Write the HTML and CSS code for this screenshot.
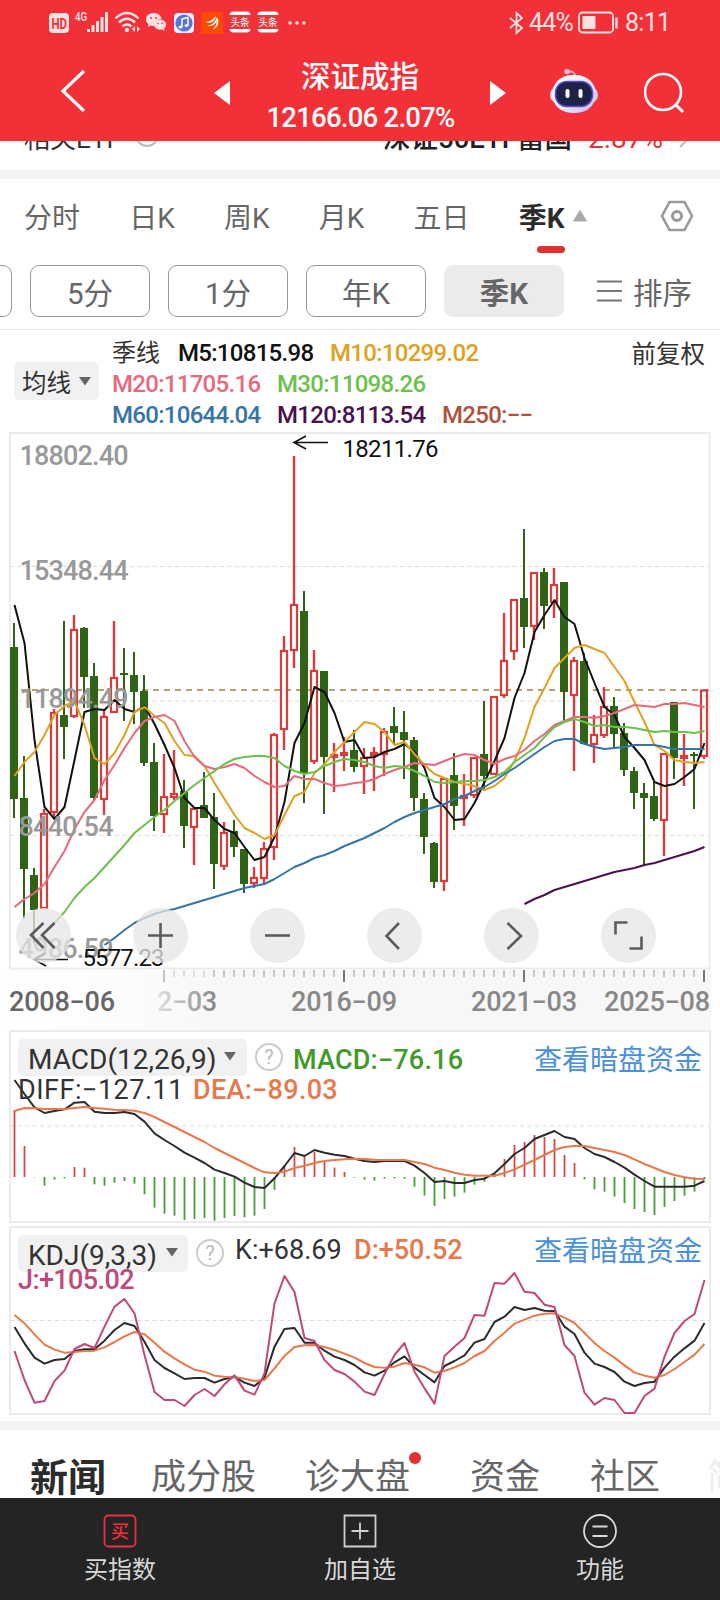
FILE: index.html
```html
<!DOCTYPE html>
<html lang="zh-CN">
<head>
<meta charset="utf-8">
<title>深证成指</title>
<link rel="stylesheet" href="styles.css">
</head>
<body>
<div class="screen">
  <header class="header">
    <div class="status">
      <svg class="status-icons" width="260" height="30" viewBox="48 8 260 30">
        <rect x="49" y="13" width="20" height="20" rx="4" fill="#ffe1e1"/>
        <text x="51.5" y="28.5" font-size="14" font-weight="700" textLength="15.5" lengthAdjust="spacingAndGlyphs" fill="#f33037">HD</text>
        <text x="75" y="20.5" font-size="12" textLength="12" lengthAdjust="spacingAndGlyphs" font-weight="500" fill="#ffe1e1">4G</text>
        <g fill="#ffe1e1"><rect x="87" y="29" width="3" height="3"/><rect x="91.500" y="25" width="3" height="7"/><rect x="96" y="21" width="3" height="11"/><rect x="100.500" y="17" width="3" height="15"/><rect x="105" y="12" width="3" height="20"/></g>
        <g fill="none" stroke="#ffe1e1" stroke-width="2.400"><path d="M115.500 18.500Q127 7.500 138.500 18.500M119 22.500Q127 15 135 22.500M122.500 26.500Q127 22.500 131.500 26.500"/></g>
        <circle cx="127" cy="30" r="2.200" fill="#ffe1e1"/>
        <path d="M135 26v6l-3-3zM137 26v6l3-3z" fill="#ffe1e1"/>
        <path d="M153.500 13c-4.500 0-7.500 3-7.500 6.300 0 2 1 3.700 2.600 4.900l-.8 2.800 3-1.500 3.500.4a7 7 0 0 1 7.300-7.200c-.5-3.300-4-5.700-8.100-5.700z" fill="#ffe1e1"/>
        <path d="M160 19.500c-3.500 0-6 2.300-6 5.100s2.700 5.100 6 5.100l2.200-.3 2.500 1.400-.6-2.300c1.300-1 2-2.300 2-3.900 0-2.800-2.700-5.100-6.100-5.100z" fill="#ffe1e1"/>
        <g fill="#f33037"><circle cx="151" cy="18" r="1"/><circle cx="156" cy="18" r="1"/><circle cx="158" cy="23.500" r=".8"/><circle cx="162" cy="23.500" r=".8"/></g>
        <rect x="174" y="13" width="20" height="20" rx="4" fill="#f3f0ff"/><circle cx="184" cy="23" r="8.600" fill="#5a74de"/>
        <path d="M182 27v-8l6-1.500v8" fill="none" stroke="#fff" stroke-width="1.500"/><ellipse cx="180.500" cy="27" rx="1.900" ry="1.500" fill="#fff"/><ellipse cx="186.500" cy="25.500" rx="1.900" ry="1.500" fill="#fff"/>
        <rect x="201" y="12" width="22" height="22" fill="#ff4a00"/>
        <path d="M205 22c5 0 8-3 11-6-1 6-5 8-11 6zM207 26c6-1 9-5 10-9 1 6-4 10-10 9zM212 30c4-3 5-7 5-13 3 5 1 11-5 13z" fill="#fff"/>
        <g id="toutiao"><rect x="229.500" y="11.500" width="21" height="21" rx="4" fill="#fff"/><rect x="229" y="15" width="22" height="14" fill="#e8383c"/><text x="230.500" y="26" font-size="10" textLength="19" lengthAdjust="spacingAndGlyphs" fill="#fff">头条</text></g>
        <use href="#toutiao" x="28"/>
        <g fill="#ffe1e1"><circle cx="290" cy="23" r="1.800"/><circle cx="297" cy="23" r="1.800"/><circle cx="304" cy="23" r="1.800"/></g>
      </svg>
      <svg class="bt" width="15" height="24" viewBox="0 0 15 24"><path d="M1 7l12 10-5.500 5V2L13 7 1 17" fill="none" stroke="#ffe1e1" stroke-width="1.800"/></svg>
      <span class="pct">44%</span>
      <svg class="batt" width="42" height="24" viewBox="0 0 42 24"><rect x="1" y="1.500" width="34" height="20" rx="3.500" fill="none" stroke="#ffe1e1" stroke-width="1.800"/><rect x="4.500" y="5" width="13" height="13" rx="1" fill="#ffe1e1"/><path d="M38.500 6.500v11" stroke="#ffe1e1" stroke-width="2.400"/></svg>
      <span class="time">8:11</span>
    </div>
    <div class="nav">
      <svg class="back" width="26" height="44" viewBox="0 0 26 44"><path d="M24 2L3 22l21 20" fill="none" stroke="#fff" stroke-width="3.200"/></svg>
      <svg class="prev" width="16" height="24"><path d="M16 0v24L0 12z" fill="#fff"/></svg>
      <div class="title"><div class="name">深证成指</div><div class="quote">12166.06 2.07%</div></div>
      <svg width="16" height="24"><path d="M0 0v24l16-12z" fill="#fff"/></svg>
      <svg class="robot" width="48" height="46" viewBox="0 0 48 46">
        <defs><linearGradient id="rb" x1="0" y1="0" x2="1" y2="1"><stop offset="0" stop-color="#fff"/><stop offset=".5" stop-color="#eee9ff"/><stop offset="1" stop-color="#c9b8ef"/></linearGradient></defs>
        <path d="M17 4q8-2 8 5" fill="none" stroke="#f6a9bb" stroke-width="2"/><circle cx="17" cy="3.500" r="2.700" fill="#f9b8c6"/>
        <ellipse cx="5" cy="27" rx="5" ry="7" fill="#f4d9ee"/><ellipse cx="43" cy="27" rx="5" ry="7" fill="#d9c3f3"/>
        <rect x="2" y="7" width="44" height="38" rx="20" fill="url(#rb)"/><rect x="5.500" y="13.500" width="37" height="25" rx="11.500" fill="#1c2347" stroke="#5b4bd0" stroke-width="1.500"/>
        <rect x="15.500" y="21" width="4" height="9" rx="2" fill="#fff"/><rect x="28.500" y="21" width="4" height="9" rx="2" fill="#fff"/>
      </svg>
      <svg class="search" width="42" height="42" viewBox="0 0 42 42"><circle cx="19" cy="20" r="18" fill="none" stroke="#fff" stroke-width="2.600"/><path d="M32 33l7 7" stroke="#fff" stroke-width="3"/></svg>
    </div>
  </header>

  <div class="related">
    <span>相关ETF</span><i class="info"></i>
    <span class="etf">深证50ETF富国</span><span class="etf-up">2.87%</span>
    <svg width="10" height="18"><path d="M1 1l8 8-8 8" fill="none" stroke="#bbb" stroke-width="2"/></svg>
  </div>

  <nav class="tabs">
    <span>分时</span><span>日K</span><span>周K</span><span>月K</span><span>五日</span>
    <span class="on">季K<i class="bar"></i></span>
    <svg class="tri" width="16" height="13"><path d="M8 1.500L14.500 12h-13z" fill="#aaa" stroke="#aaa" stroke-linejoin="round"/></svg>
    <svg class="hex" width="34" height="34" viewBox="0 0 34 34"><g fill="none" stroke="#999" stroke-linejoin="round"><path d="M9.500 3h15L32 17l-7.500 14h-15L2 17z" stroke-width="2.600"/><circle cx="17" cy="17" r="4.500" stroke-width="3"/></g></svg>
  </nav>

  <div class="pills">
    <b class="stub"></b><span>5分</span><span>1分</span><span>年K</span><span class="on">季K</span>
    <svg width="26" height="24"><path d="M1 2.500h25M1 12h25M1 21.500h25" stroke="#777" stroke-width="2.200"/></svg><em>排序</em>
  </div>

  <div class="legend">
    <button class="chip">均线<svg width="12" height="9"><path d="M0 0h12L6 8.500z" fill="#666"/></svg></button>
    <div class="ma">
      <div><span class="cn">季线</span><span class="m5">M5:10815.98</span><span class="m10">M10:10299.02</span></div>
      <div><span class="m20">M20:11705.16</span><span class="m30">M30:11098.26</span></div>
      <div><span class="m60">M60:10644.04</span><span class="m120">M120:8113.54</span><span class="m250">M250:−−</span></div>
    </div>
    <span class="adj">前复权</span>
  </div>

  <div class="kline"><svg id="kline" width="720" height="598" viewBox="0 432 720 598"></svg></div>

  <section class="panel macd">
    <svg class="plot" id="macd" width="702" height="193" viewBox="9 1030 702 193"></svg>
    <div class="row">
      <button class="pick"><span class="macd-name">MACD(12,26,9)</span><svg width="12" height="9"><path d="M0 0h12L6 8.500z" fill="#666"/></svg></button>
      <i class="help">?</i><span class="val v-macd">MACD:−76.16</span><a class="link">查看暗盘资金</a>
    </div>
    <div class="row2"><span class="val v-diff">DIFF:−127.11</span><span class="val v-dea">DEA:−89.03</span></div>
  </section>
  <section class="panel kdj">
    <svg class="plot" id="kdj" width="702" height="189" viewBox="9 1226 702 189"></svg>
    <div class="row">
      <button class="pick"><span class="kdj-name">KDJ(9,3,3)</span><svg width="12" height="9"><path d="M0 0h12L6 8.500z" fill="#666"/></svg></button>
      <i class="help">?</i><span class="val v-k">K:+68.69</span><span class="val v-d">D:+50.52</span><a class="link">查看暗盘资金</a>
    </div>
    <div class="row2"><span class="val v-j">J:+105.02</span></div>
  </section>

  <nav class="news"><span class="on">新闻</span><span>成分股</span><span class="dot">诊大盘</span><span>资金</span><span>社区</span><span class="more">简</span></nav>

  <footer class="bottom">
    <div><svg width="34" height="34" viewBox="0 0 34 34"><rect x="1.500" y="1.500" width="31" height="31" rx="4" fill="none" stroke="#e8323a" stroke-width="1.800"/><text x="8" y="23.500" font-size="18" font-weight="500" fill="#f33037">买</text></svg><span>买指数</span></div>
    <div><svg width="34" height="34" viewBox="0 0 34 34"><path d="M1.500 1.500h31v31h-31zM17 8.500v17M8.500 17h17" fill="none" stroke="#d0d0d0" stroke-width="1.800"/></svg><span>加自选</span></div>
    <div><svg width="34" height="34" viewBox="0 0 34 34"><circle cx="17" cy="17" r="16" fill="none" stroke="#d8d8d8" stroke-width="1.800"/><path d="M9.500 12.500h15M9.500 22h15" stroke="#d8d8d8" stroke-width="1.800"/></svg><span>功能</span></div>
  </footer>
</div>
<script src="charts.js"></script>
</body>
</html>
```

FILE: styles.css
```css
* { box-sizing: border-box; }
body { margin: 0; background: #fff; font-family: Roboto, "Noto Sans CJK SC", sans-serif; color: #333; }
svg { display: block; flex: none; }
i, em { font-style: normal; }
button { border: 0; padding: 0; margin: 0; font: inherit; color: inherit; }
span, a { white-space: nowrap; }
.screen { width: 720px; height: 1600px; overflow: hidden; display: flex; flex-direction: column; }
.screen > * { flex: none; }

.header { height: 141px; background: #f23037; color: #fff; position: relative; z-index: 2; }
.status { height: 45px; display: flex; align-items: center; padding-left: 48px; color: #ffe1e1; font-size: 25px; }
.bt { margin-left: 201px; }
.pct { margin-left: 5px; width: 44px; letter-spacing: -0.8px; }
.batt { margin-left: 5px; }
.time { margin-left: 5px; letter-spacing: -0.7px; }
.nav { height: 96px; display: flex; align-items: center; padding-left: 60px; }
.back { position: relative; top: -2px; }
.prev { margin-left: 128px; }
.title { width: 260px; text-align: center; padding-top: 10px; }
.name { font-size: 29.500px; line-height: 36px; font-weight: 500; margin-top: 4px; }
.quote { font-size: 27.500px; line-height: 46px; font-weight: 500; letter-spacing: -0.75px; padding-left: 1px; }
.robot { margin-left: 44px; position: relative; top: -2px; }
.search { margin-left: 46px; }

.related { height: 29px; display: flex; align-items: center; padding: 0 24px; font-size: 26px; line-height: 26px; position: relative; }
.related > * { position: relative; top: -17px; flex: none; }
.related .info { width: 24px; height: 24px; border: 2px solid #bbb; border-radius: 50%; margin-left: 14px; top: -21px; }
.related .etf { margin-left: auto; font-size: 27.500px; font-weight: 500; color: #222; }
.related .etf-up { color: #e03038; width: 76px; margin-left: 16px; font-size: 28px; font-weight: 400; }
.related svg { margin-left: 15px; margin-right: 7px; }

.tabs { height: 95px; padding-bottom: 13px; border-top: 9px solid #f4f4f4; display: flex; align-items: center; position: relative; padding-left: 24px; font-size: 28px; color: #666; }
.tabs span + span { margin-left: 49.200px; }
.tabs .on { font-weight: 700; color: #2b2b2b; position: relative; }
.bar { position: absolute; left: 18px; top: 50px; width: 28px; height: 7px; border-radius: 4px; background: #e03030; }
.tri { margin-left: 7px; }
.hex { margin-left: auto; margin-right: 26px; }

.pills { height: 65px; display: flex; align-items: center; padding-bottom: 13px; font-size: 29.500px; color: #666; border-bottom: 1.500px solid #e6e6e6; }
.pills span, .stub { height: 52px; width: 120px; border: 1.500px solid #999; border-radius: 9px; display: flex; align-items: center; justify-content: center; margin-right: 18px; }
.pills .stub { width: 32px; margin-left: -20px; }
.pills .on { background: #ebebeb; border-color: #ebebeb; font-weight: 700; }
.pills svg { margin-left: 14px; }
.pills em { margin-left: 11px; }

.legend { height: 102px; display: flex; padding-left: 14px; position: relative; font-size: 24.500px; }
.chip { width: 85px; height: 38px; margin-top: 32px; border-radius: 5px; background: #f1f1f1; display: flex; align-items: center; justify-content: center; gap: 8px; }
.ma { margin-left: 13px; padding-top: 8px; font-size: 24px; font-weight: 500; }
.ma div { height: 31px; line-height: 31px; display: flex; }
.ma span { width: 165px; }
.ma .cn { width: 66px; font-weight: 400; }
.ma .m5 { width: 152px; color: #111; }
.m10 { color: #e0a020; } .m20 { color: #e8687c; } .m30 { color: #6cc04c; }
.m60 { color: #3574a8; } .m120 { color: #4a1050; } .m250 { color: #b0523c; }
.ma span:not(.cn) { letter-spacing: -0.7px; }
.adj { position: absolute; right: 15px; top: 7px; line-height: 36px; }

.kline { height: 598px; }
.panel { width: 702px; margin-left: 9px; border: 2px solid #ebebeb; position: relative; }
.macd { height: 193px; }
.kdj { height: 189px; margin-top: 3px; }
.plot { position: absolute; left: -2px; top: -2px; }
.row, .row2 { position: relative; display: flex; padding-left: 7px; }
.row { height: 37px; margin-top: 7px; }
.pick { height: 37px; border-radius: 5px; background: #f1f1f1; display: flex; align-items: center; padding-left: 10px; font-size: 28px; gap: 10px; }
.pick span { text-align: left; line-height: 42px; margin-top: 4px; }
.pick svg { margin-top: -2px; }
.macd .pick { width: 229px; } .kdj .pick { width: 170px; }
.macd-name { width: 186px; letter-spacing: 0; }
.kdj-name { width: 128px; letter-spacing: 0; }
.help { width: 28px; height: 28px; border: 2px solid #ccc; border-radius: 50%; margin: 4px 0 0 8px; font-size: 20px; line-height: 24px; text-align: center; color: #bbb; }
.val { font-size: 27px; font-weight: 400; line-height: 32px; }
.v-macd { color: #3f9a2a; margin: 5px 0 0 10px; font-weight: 500; letter-spacing: 0.2px; }
.v-k { margin: -1px 0 0 11px; width: 119px; }
.v-d { color: #e8784a; margin-top: -1px; font-weight: 500; }
.link { position: absolute; left: 523px; top: 2px; font-size: 28px; line-height: 40px; color: #4a8fdc; }
.kdj .link { top: -3px; }
.row2 { height: 32px; margin-top: -2px; }
.v-diff { width: 175px; letter-spacing: 0.5px; }
.v-dea { color: #e8784a; font-weight: 500; letter-spacing: 0.3px; }
.kdj .row2 { margin-top: -8px; }
.v-j { color: #c0487c; font-weight: 500; letter-spacing: -0.6px; }

.news { margin-top: 6px; border-top: 9px solid #f4f4f4; height: 77px; display: flex; position: relative; padding-left: 30px; font-size: 35px; line-height: 50px; color: #666; overflow: hidden; }
.news span { margin-top: 23px; flex: none; }
.news .on { font-size: 38px; font-weight: 700; color: #2b2b2b; width: 121px; }
.news span:nth-child(2) { width: 154px; }
.news .dot { width: 165px; position: relative; }
.dot::after { content: ""; position: absolute; left: 104px; top: -1px; width: 12px; height: 12px; border-radius: 50%; background: #e03030; }
.news span:nth-child(4) { width: 120px; }
.news span:nth-child(5) { width: 117px; }
.more { color: #eee; }

.bottom { height: 102px; background: #242424; color: #d8d8d8; display: flex; }
.bottom div { flex: 1; display: flex; flex-direction: column; align-items: center; padding-top: 16px; font-size: 24px; line-height: 36px; gap: 4px; }
```

FILE: charts.js
```js
const X = i => 14.5 + i * 10;
const grid = (y, c = '#ddd', w = 1, d = '4 3.5') =>
  `<path d="M10 ${y}H709" stroke="${c}" stroke-width="${w}" stroke-dasharray="${d}"/>`;
const line = (ys, c, from = 0, w = 2) =>
  `<polyline fill="none" stroke="${c}" stroke-width="${w}" stroke-linejoin="round" points="${ys.map((y, i) => X(i + from) + ',' + y).join(' ')}"/>`;
const label = (x, y, len, size, color, t, weight = 500) =>
  `<text x="${x}" y="${y}" textLength="${len}" font-size="${size}" fill="${color}" font-weight="${weight}">${t}</text>`;

// side, high, body top, body bottom, low
const candles = `g623,647,799,818 g756,798,869,919 g868,875,910,943 r809,814,908,909 r709,713,812,818 g621,715,727,759 r615,630,716,718 g627,628,677,708 g663,676,798,800 r709,717,799,815
r621,678,712,713 g648,673,675,721 g652,675,692,724 g675,691,763,766 g743,762,816,831 r754,797,814,833 r750,794,797,800 g780,791,826,848 r808,809,827,865 g772,805,818,818
g793,817,864,889 r822,833,866,870 g820,831,847,857 g849,849,884,893 r867,878,883,888 r842,849,878,885 r733,735,847,860 r636,651,729,750 r456,605,650,668 g591,611,774,803
r650,671,761,764 g671,671,757,814 r743,755,757,792 r737,753,755,771 g730,750,767,772 r748,758,766,794 r747,753,755,791 r728,732,754,776 g707,726,733,745 g711,732,740,779
g737,740,798,811 g793,799,837,854 g842,843,882,888 r778,779,881,891 g753,775,806,830 r774,796,798,826 r757,758,795,798 g701,754,776,791 r696,697,774,775 r613,661,695,698
r599,600,651,660 g529,598,627,648 r572,573,626,640 g568,572,606,629 r568,585,602,618 g582,582,692,721 r657,661,695,771 g653,661,744,744 r715,735,744,763 r687,707,735,738
g697,706,734,747 g723,733,770,776 g767,771,793,809 g783,793,798,865 g780,796,819,821 r753,754,820,856 g702,702,758,779 r734,756,758,786 g752,754,756,809 r690,690.5,756,759`
  .split(/\s+/).map(s => [s[0], ...s.slice(1).split(',').map(Number)]);

const ma5 = [605,643,740,807,819,807,760,712,709,710,700,709,712,706,724,745,768,798,808,808,820,829,833,847,860,857,837,802,743,723,687,692,713,742,740,758,757,752,749,744,752,768,798,807,820,819,803,782,761,738,698,673,632,615,600,617,624,658,683,707,715,737,748,760,782,786,784,777,769,743];
const ma10 = [776,762,752,735,715,706,701,725,758,764,753,735,712,707,716,723,741,755,756,766,783,799,815,828,833,839,835,815,796,792,773,764,752,742,732,722,724,732,745,742,754,765,774,778,782,784,786,790,786,778,761,738,707,688,668,658,648,645,649,653,667,681,702,722,745,751,760,762,763,762];
const ma20 = [907,899,893,884,867,851,829,812,800,780,765,748,733,721,717,715,721,741,757,766,769,767,764,768,776,782,787,786,776,779,779,783,786,785,783,782,779,774,770,767,763,764,765,761,757,754,755,760,764,759,756,750,741,734,725,721,717,717,718,716,713,709,705,706,707,704,704,703,705,707];
const ma30 = [942,934,923,912,898,887,878,867,856,845,833,825,817,810,801,793,785,778,771,764,759,757,756,756,758,766,771,774,772,766,762,759,760,762,766,768,766,767,771,776,782,783,782,781,781,780,777,772,762,755,748,737,727,722,719,722,726,725,727,727,728,730,732,731,732,732,733,731];
const ma60 = [945,938,930,923,918,914,911,909,906,903,900,897,894,891,888,886,884,879,873,867,863,858,855,851,846,842,838,833,828,822,817,813,810,807,804,799,796,791,787,781,774,768,761,754,747,741,739,739,744,747,749,748,747,745,745,745,747,749,749,749,749];
const ma120 = [904,899,895,890,887,884,881,878,875,872,870,868,865,863,860,857,854,851,847];

let k = `<rect x="10" y="433" width="699.5" height="535.5" fill="none" stroke="#ebebeb" stroke-width="2"/>`;
k += grid(566.5) + grid(701, '#e8e8e8', 1.5) + grid(835.5) + grid(690, '#b8a070', 1.8, '6 5');
candles.forEach(([s, h, t, b, l], i) => {
  const x = 14 + i * 10;
  if (s === 'g') {
    k += `<path d="M${x} ${h}V${l}" stroke="#2f6416" stroke-width="2"/><rect x="${x - 4}" y="${t}" width="8" height="${Math.max(b - t, 2)}" fill="#2f6416"/>`;
  } else {
    k += `<path d="M${x} ${h}V${t}M${x} ${b}V${l}" stroke="#d83c3c" stroke-width="2.4"/><rect x="${x - 3}" y="${t}" width="6" height="${b - t}" fill="#fff" stroke="#d83c3c" stroke-width="2.2"/>`;
  }
});
k += line(ma120, '#4a1050', 51) + line(ma5, '#111') + line(ma10, '#e0a020') + line(ma20, '#e8687c') + line(ma30, '#6cc04c', 2) + line(ma60, '#3574a8', 9);
[['18802.40', 465], ['15348.44', 580], ['11894.49', 708], ['8440.54', 836], ['4986.59', 958]].forEach(([t, y]) => {
  k += label(t.length > 7 ? 19.5 : 18.5, y, t.length > 7 ? 109 : 95, 27, '#999', t);
});
k += `<path d="M328 442.500H294.500M306 436l-12 6.500 12 6.500" fill="none" stroke="#111" stroke-width="1.600"/>` + label(342.5, 457, 96, 24, '#111', '18211.76', 400);
k += `<path d="M68 959.500H34.500M46 953l-12 6.500 12 6.500" fill="none" stroke="#111" stroke-width="1.600"/>` + label(82.5, 966, 82, 24, '#111', '5577.23', 400);

// floating controls
const icons = ['M43.500 923L31 935l12.500 13M54.500 923L42 935l12.500 13', 'M148 935.500h25M160.500 923v25', 'M265 935.500h25', 'M399 923l-12.500 13 12.500 13', 'M507.500 923l13.500 13-13.500 13', 'M627.500 922.500h-12v12M629.500 948.500h12v-12'];
[43.5, 160.5, 277.5, 394.5, 511.5, 628.5].forEach((x, i) => {
  k += `<circle cx="${x}" cy="935.500" r="27.500" fill="#e6e6e6" fill-opacity=".76"/><path d="${icons[i]}" fill="none" stroke="#5c5c5c" stroke-width="2.600"/>`;
});

// date axis
k += `<defs><linearGradient id="strip"><stop offset="0" stop-color="#fff"/><stop offset=".18" stop-color="#fcfcfc"/><stop offset=".32" stop-color="#f7f7f7"/></linearGradient>
<linearGradient id="fade" gradientUnits="userSpaceOnUse" x1="155" y1="0" x2="215" y2="0"><stop offset="0" stop-color="#e4e4e4"/><stop offset="1" stop-color="#888"/></linearGradient></defs>
<rect x="0" y="970" width="711" height="60" fill="url(#strip)"/>`;
for (let i = 15; i < 70; i++) {
  const major = [15, 33, 51, 69].includes(i), x = 14 + i * 10;
  k += `<path d="M${x} 970V${major ? 982 : 977}" stroke="${i < 20 ? '#c4c4c4' : major ? '#777' : '#999'}" stroke-width="${major ? 2 : 1}"/>`;
}
const date = (x, t, c, len = 106) => label(x, 1011, len, 27, c, t);
k += date(9, '2008−06', '#666') + date(157, '2−03', 'url(#fade)', 60) + date(291, '2016−09', '#888') + date(471, '2021−03', '#888') + date(604, '2025−08', '#888');
document.getElementById('kline').innerHTML = k;

// indicator panels: values are thirds of a pixel below the panel origin
const S = a => a.map(v => 1020 + v / 3);
const bars = [270,378,472,497,479,475,441,443,493,497,488,483,491,523,563,581,587,600,597,594,602,594,588,592,587,567,510,440,381,410,396,424,443,456,473,479,482,476,475,476,500,527,558,537,530,518,494,485,462,417,375,366,345,351,357,405,429,478,508,515,530,549,567,576,585,561,543,527,515,478];
const diff = [180,222,262,279,273,268,248,246,275,279,279,276,282,305,340,360,378,398,413,429,449,459,470,488,501,504,475,438,399,408,390,398,404,408,416,423,426,423,423,423,437,459,486,483,489,489,480,476,460,432,402,384,357,345,333,351,357,384,402,411,426,443,464,483,500,500,500,500,497,483];
const dea = [273,264,265,267,267,267,264,261,264,266,269,270,272,279,291,306,321,336,351,366,384,399,414,429,444,457,459,455,444,437,429,423,420,418,416,417,419,420,420,420,426,432,443,450,458,464,467,467,467,459,448,434,420,405,390,381,378,378,384,390,396,405,418,432,444,456,465,472,476,477];
document.getElementById('macd').innerHTML = grid(1126, '#e8e8e8', 1.5) +
  S(bars).map((y, i) => `<path d="M${X(i)} 1177V${y}" stroke="${y < 1177 ? '#d64848' : '#46a035'}" stroke-width="1.800"/>`).join('') +
  line(S(diff), '#2b2b2b') + line(S(dea), '#e8784a');

const kk = [921,970,1013,1031,1020,1017,993,988,988,962,930,909,918,965,1020,1044,1060,1077,1074,1074,1088,1077,1071,1088,1098,1073,980,927,924,968,968,992,1010,1020,1035,1057,1067,1052,1027,1009,1043,1065,1087,1038,1023,1006,968,957,906,890,861,870,864,872,873,920,942,998,1031,1041,1056,1085,1098,1089,1085,1043,1010,985,962,909];
const dd = [885,910,943,974,989,998,996,993,992,982,966,949,936,943,968,995,1015,1033,1049,1055,1067,1070,1071,1076,1083,1080,1045,1008,981,976,975,981,990,1001,1013,1029,1041,1043,1040,1029,1034,1042,1058,1053,1042,1029,1008,993,963,938,911,899,887,881,880,893,909,939,969,993,1013,1036,1058,1067,1073,1065,1047,1026,1004,972];
const jj = [993,1080,1148,1143,1083,1052,987,972,984,920,860,837,880,1005,1116,1140,1140,1158,1125,1107,1128,1093,1066,1112,1124,1060,850,768,816,954,963,1020,1050,1062,1085,1115,1125,1062,1005,969,1055,1105,1151,1008,980,954,885,887,789,791,759,815,819,854,861,975,1008,1118,1154,1134,1140,1179,1179,1128,1106,1010,939,903,882,780];
document.getElementById('kdj').innerHTML = grid(1320.5) + line(S(kk), '#2b2b2b') + line(S(dd), '#e8784a') + line(S(jj), '#c0487c');
```
